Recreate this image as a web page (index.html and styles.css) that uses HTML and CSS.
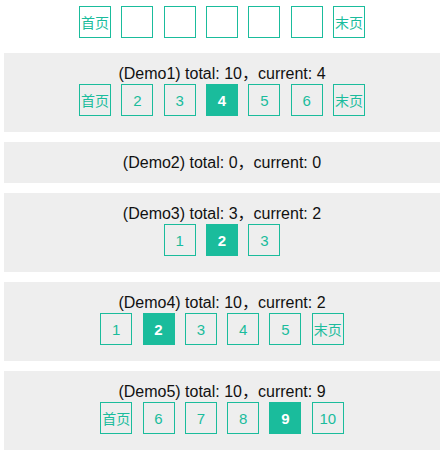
FILE: index.html
```html
<!DOCTYPE html>
<html>
<head>
<meta charset="utf-8">
<link rel="stylesheet" href="styles.css">
</head>
<body>
<div class="page">
  <div class="pager first">
    <span class="btn cn">首页</span>
    <span class="btn"></span>
    <span class="btn"></span>
    <span class="btn"></span>
    <span class="btn"></span>
    <span class="btn"></span>
    <span class="btn cn">末页</span>
  </div>

  <div class="panel">
    <div class="title">(Demo1) total: 10，current: 4</div>
    <div class="pager">
      <span class="btn cn">首页</span>
      <span class="btn">2</span>
      <span class="btn">3</span>
      <span class="btn active">4</span>
      <span class="btn">5</span>
      <span class="btn">6</span>
      <span class="btn cn">末页</span>
    </div>
  </div>

  <div class="panel">
    <div class="title">(Demo2) total: 0，current: 0</div>
  </div>

  <div class="panel">
    <div class="title">(Demo3) total: 3，current: 2</div>
    <div class="pager">
      <span class="btn">1</span>
      <span class="btn active">2</span>
      <span class="btn">3</span>
    </div>
  </div>

  <div class="panel">
    <div class="title">(Demo4) total: 10，current: 2</div>
    <div class="pager">
      <span class="btn">1</span>
      <span class="btn active">2</span>
      <span class="btn">3</span>
      <span class="btn">4</span>
      <span class="btn">5</span>
      <span class="btn cn">末页</span>
    </div>
  </div>

  <div class="panel">
    <div class="title">(Demo5) total: 10，current: 9</div>
    <div class="pager">
      <span class="btn cn">首页</span>
      <span class="btn">6</span>
      <span class="btn">7</span>
      <span class="btn">8</span>
      <span class="btn active">9</span>
      <span class="btn">10</span>
    </div>
  </div>
</div>
</body>
</html>
```

FILE: styles.css
```css
html, body {
  margin: 0;
  padding: 0;
  background: #fff;
}

body {
  font-family: "Liberation Sans", "Noto Sans CJK SC", sans-serif;
  color: #111;
}

.page {
  padding: 6px 0 0 4px;
}

.pager {
  display: flex;
  justify-content: center;
  gap: 10.33px;
}

.pager.first {
  margin-bottom: 15px;
}

.btn {
  box-sizing: border-box;
  width: 32px;
  height: 32px;
  border: 1px solid #1abc9c;
  color: #1abc9c;
  font-size: 15px;
  display: flex;
  align-items: center;
  justify-content: center;
  white-space: nowrap;
  overflow: visible;
}

.btn.cn {
  font-size: 14px;
  font-family: "Noto Sans CJK SC", sans-serif;
}

.btn.active {
  background: #1abc9c;
  color: #fff;
  font-weight: bold;
}

.panel {
  background: #eee;
  padding: 10px 0;
  margin-bottom: 10px;
}

.panel .pager {
  margin-bottom: 6px;
}

.title {
  text-align: center;
  font-size: 16px;
  line-height: 21px;
  height: 21px;
}
```
